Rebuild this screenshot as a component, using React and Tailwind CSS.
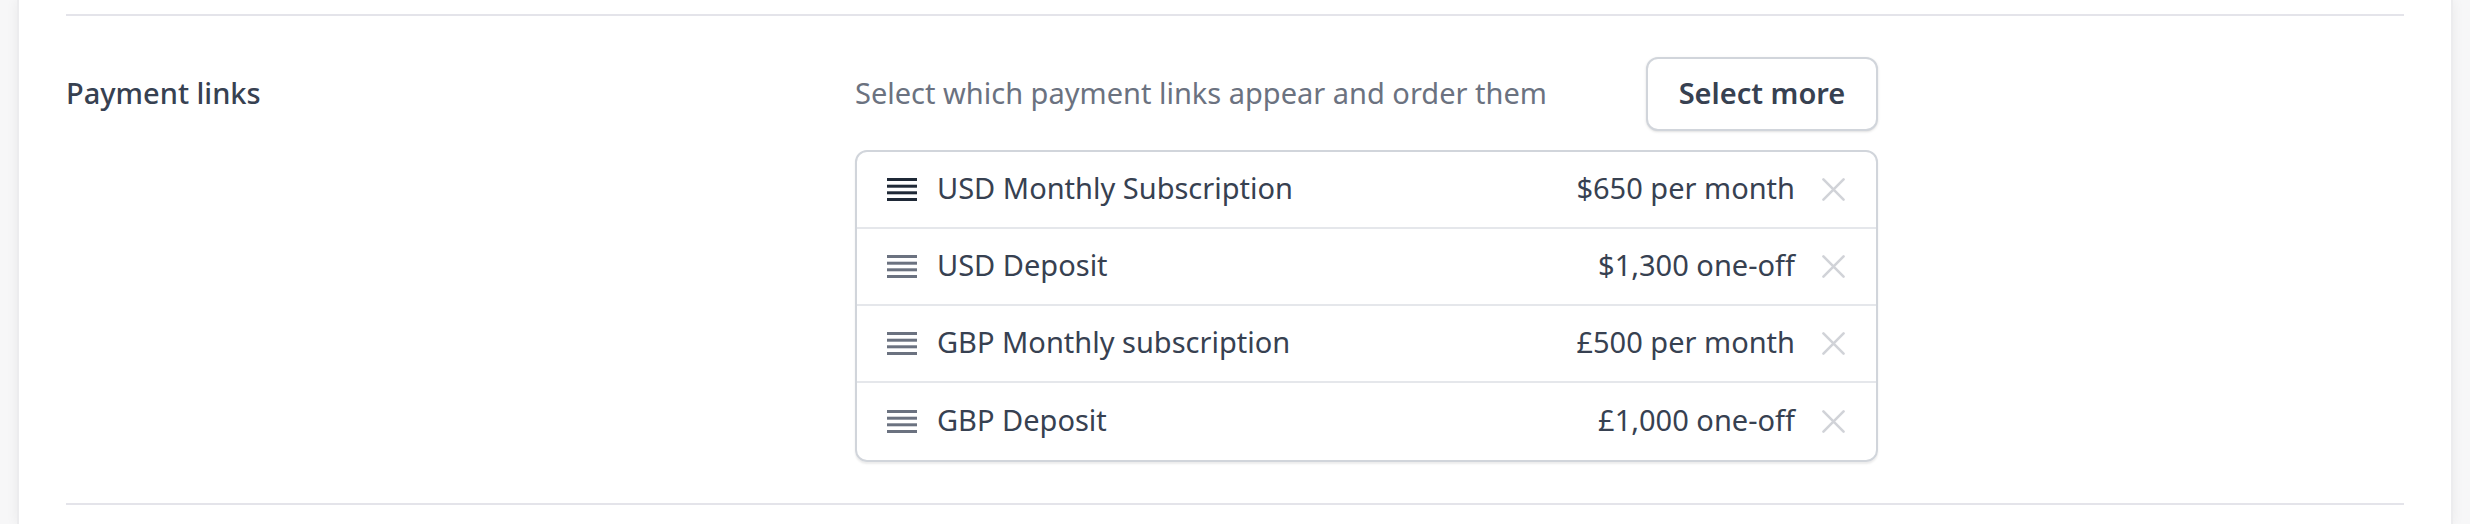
const links = [
  { name: 'USD Monthly Subscription', price: '$650 per month', active: true },
  { name: 'USD Deposit', price: '$1,300 one-off' },
  { name: 'GBP Monthly subscription', price: '£500 per month' },
  { name: 'GBP Deposit', price: '£1,000 one-off' },
];

// Drag handle: four horizontal bars
function DragHandle({ className }) {
  return (
    <svg width="30" height="23" viewBox="0 0 30 23" className={className} fill="currentColor">
      <rect x="0" y="0" width="30" height="3" />
      <rect x="0" y="6.7" width="30" height="3" />
      <rect x="0" y="13.3" width="30" height="3" />
      <rect x="0" y="20" width="30" height="3" />
    </svg>
  );
}

function RemoveIcon({ className }) {
  return (
    <svg width="23" height="23" viewBox="0 0 24 24" className={className} fill="none" stroke="currentColor" strokeWidth="2.7" strokeLinecap="round">
      <path d="M1.5 1.5l21 21M22.5 1.5l-21 21" />
    </svg>
  );
}

const App = () => {
  return (
    <div className="w-[2470px] h-[524px] bg-[#f7f7f8] px-[17px] font-['Noto_Sans',sans-serif] text-[29px]">
      <div className="h-full bg-white border-x-2 border-[#ececee] shadow-[0_0_12px_rgba(0,0,0,0.06)] px-[47px] pt-[14px]">
        <div className="border-t-2 border-[#e4e4ea]" />
        {/* Payment links section */}
        <div className="flex py-[41px]">
          <div className="w-[789px] h-[74px] flex items-center pb-[3px]">
            <h3 className="font-medium text-[#374151]">Payment links</h3>
          </div>
          <div className="w-[1023px]">
            <div className="flex items-center justify-between">
              <p className="text-[#6b7280] pb-[3px]">Select which payment links appear and order them</p>
              <button className="w-[232px] h-[74px] pb-[3px] rounded-[12px] border-2 border-[#d1d5db] bg-white font-semibold text-[#374151] shadow-sm">
                Select more
              </button>
            </div>
            <ul className="mt-[19px] border-2 border-[#d1d5db] rounded-[12px] shadow-[0_2px_2px_rgba(0,0,0,0.08)] divide-y-2 divide-[#e5e7eb]">
              {links.map((l, idx) => (
                <li key={idx} className="h-[77px] flex items-center pl-[30px] pr-[31px]">
                  <DragHandle className={l.active ? 'text-[#1f2937]' : 'text-[#6b7280]'} />
                  <span className="ml-[20px] pb-[4px] text-[#374151]">{l.name}</span>
                  <span className="ml-auto pb-[4px] text-[#374151]">{l.price}</span>
                  <RemoveIcon className="ml-[27px] text-[#d1d3d8]" />
                </li>
              ))}
            </ul>
          </div>
        </div>
        <div className="border-t-2 border-[#e4e4ea]" />
      </div>
    </div>
  );
};

export default App;
